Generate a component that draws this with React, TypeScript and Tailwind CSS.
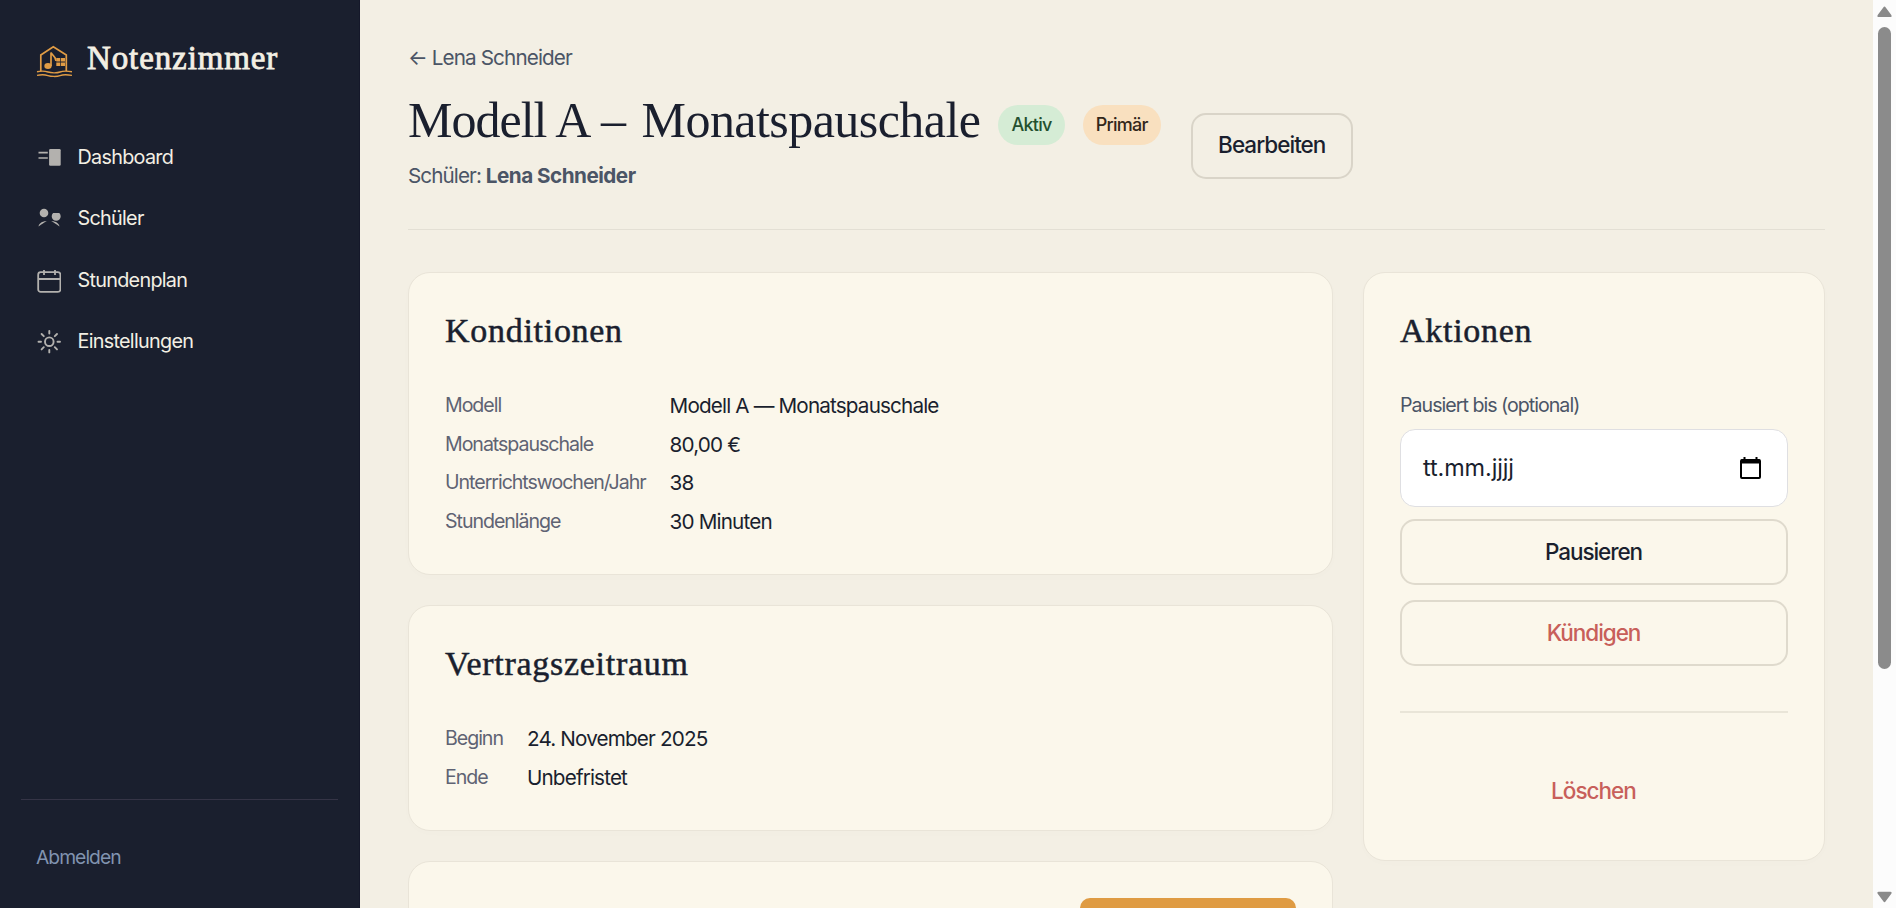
import type { ReactNode } from "react";

const SERIF = "font-['Liberation_Serif',serif]";

interface NavItem {
  label: string;
  icon: ReactNode;
}

const navItems: NavItem[] = [
  {
    label: "Dashboard",
    icon: (
      <>
        <path d="M1.5 6.7h9.3M1.5 12h9.3" stroke="currentColor" strokeWidth="1.7" />
        <rect x="12.1" y="3.1" width="11.6" height="16.7" rx="1.2" fill="currentColor" />
      </>
    ),
  },
  {
    label: "Schüler",
    icon: (
      <>
        <circle cx="7" cy="6" r="4.3" fill="currentColor" />
        <path d="M16.1 6h6.2a4.5 4.5 0 1 1-6.2 0z" fill="currentColor" />
        <path
          d="M1.5 19.4c.8-3.4 4-5.6 8.400-5.200-1.800.5-2.800 1.200-3.600 2-1.600.9-3.200 1.900-4.800 3.200zM22.500 19.400c-.8-3.400-4-5.600-8.400-5.200 1.800.5 2.800 1.200 3.600 2 1.600.9 3.200 1.900 4.800 3.200z"
          fill="currentColor"
        />
      </>
    ),
  },
  {
    label: "Stundenplan",
    icon: (
      <g fill="none" stroke="currentColor" strokeWidth="1.8">
        <rect x="1.2" y="3.2" width="22.2" height="19.7" rx="2.5" />
        <path d="M1.2 10h22.2M7 1v5M18 1v5" />
      </g>
    ),
  },
  {
    label: "Einstellungen",
    icon: (
      <g fill="none" stroke="currentColor" strokeWidth="1.9" strokeLinecap="round">
        <circle cx="12.3" cy="11.700" r="4.3" />
        <path d="M12.3 1v2.500M12.300 19.900v2.500M1.500 11.700H4M20.500 11.700H23M4.600 4l2.200 2.200M17.800 17.200l2.200 2.200M4.600 19.400l2.200-2.200M17.800 6.200L20 4" />
      </g>
    ),
  },
];

function Logo() {
  return (
    <svg width="36" height="36" viewBox="0 0 36 36" fill="none" stroke="currentColor" strokeWidth="1.7">
      <path d="M4.800 28V12L17.300 3.800 30.300 12v16" />
      <path d="M15 23V9.500c1 3 5 3.500 5 8.500" />
      <ellipse cx="12" cy="23" rx="3.700" ry="3" fill="currentColor" stroke="none" />
      <path
        d="M20.300 15h4v3.600h-4zM25 15h4v3.600h-4zM20.300 19.500h4v3.600h-4zM25 19.500h4v3.600h-4z"
        fill="currentColor"
        stroke="none"
      />
      <path d="M1 28.800c5-1.200 8-.8 11 .2s9 1.200 12 0 6-1.400 12-.2" strokeWidth="1.400" />
      <path d="M1 32.400c5-1.200 8-.8 11 .2s9 1.200 12 0 6-1.400 12-.2" strokeWidth="1.400" />
    </svg>
  );
}

function Sidebar() {
  return (
    <aside className="flex h-full w-[360px] shrink-0 flex-col border-r border-[#15182a] bg-[#1a1f2e] text-[#f3efe4]">
      <div className="flex h-[122px] items-center pl-9">
        <span className="text-[#e09c45]">
          <Logo />
        </span>
        <span
          className={`mb-[5px] ml-[15px] text-[33px] leading-none tracking-[0.027em] [-webkit-text-stroke:0.8px_#f3efe4] ${SERIF}`}
        >
          Notenzimmer
        </span>
      </div>
      <nav className="mt-[5px]">
        {navItems.map((item) => (
          <a key={item.label} className="flex h-[61.5px] items-center pl-[37px]">
            <svg width="24" height="24" viewBox="0 0 24 24" className="text-[#b3b1ae]">
              {item.icon}
            </svg>
            <span className="ml-[16.5px] text-[19.8px] tracking-[-0.036em]">{item.label}</span>
          </a>
        ))}
      </nav>
      <div className="mx-[21px] mt-auto flex h-[109px] items-center border-t border-[#353446] pl-[15px] pt-1.5">
        <a className="text-[19.3px] tracking-[-0.05em] text-[#8194b0]">Abmelden</a>
      </div>
    </aside>
  );
}

function Card({ title, children }: { title: string; children: ReactNode }) {
  return (
    <section className="rounded-[22px] border border-[#e9e4d8] bg-[#fbf7eb] px-9 pt-[35px] shadow-[0_2px_12px_rgba(26,31,46,0.01)]">
      <h2
        className={`h-[46px] text-[34px] leading-[46px] tracking-[0.021em] [-webkit-text-stroke:0.5px_#1a1f2e] ${SERIF}`}
      >
        {title}
      </h2>
      {children}
    </section>
  );
}

function Details({ rows }: { rows: [string, string][] }) {
  return (
    <dl className="mt-8 grid grid-cols-[max-content_1fr] gap-x-6">
      {rows.map(([label, value]) => (
        <div key={label} className="contents">
          <dt className="h-[38.6px] text-[19.6px] leading-[38px] tracking-[-0.053em] text-[#5f6373]">{label}</dt>
          <dd className="h-[38.6px] text-[20.7px] leading-[39px] tracking-[-0.041em]">{value}</dd>
        </div>
      ))}
    </dl>
  );
}

function Scrollbar() {
  return (
    <div className="flex h-full w-[23px] shrink-0 flex-col items-center bg-[#fcfcfc]">
      <svg width="23" height="27" viewBox="0 0 23 27" fill="#8a8a8a">
        <path d="M10.300 7.400q1.200-1.800 2.400 0l5.600 7.600q1 2-1 2H5.700q-2 0-1-2z" />
      </svg>
      <div className="h-[642px] w-[13px] rounded-full bg-[#8b8b8b]" />
      <svg width="23" height="27" viewBox="0 0 23 27" fill="#8a8a8a" className="mt-auto">
        <path d="M10.300 20.300q1.200 1.800 2.400 0l5.600-7.600q1-2-1-2H5.700q-2 0-1 2z" />
      </svg>
    </div>
  );
}

export default function App() {
  return (
    <div className="flex h-[908px] w-[1896px] overflow-hidden bg-[#f3efe4] font-['Inter',sans-serif] text-[#1a1f2e]">
      <Sidebar />

      <main className="h-full flex-1 overflow-hidden px-12 pt-11">
        <header className="h-[186px] border-b border-[#e3dfd4]">
          <a className="block h-7 text-[20.7px] leading-7 tracking-[-0.043em] text-[#4b5566]">← Lena Schneider</a>
          <div className="flex">
            <div>
              <div className="mt-[18px] flex h-[69px] items-center">
                <h1 className={`mb-[10px] whitespace-pre text-[50px] leading-[62px] ${SERIF}`}>
                  <span className="tracking-[-0.02em]">Modell A </span>
                  <span className="ml-[2px] mr-[3px]">– </span>
                  <span className="tracking-[-0.011em]">Monatspauschale</span>
                </h1>
                <span className="ml-[18px] h-10 rounded-full bg-[#d5ecd5] px-[13px] text-[18px] font-medium leading-[39px] tracking-[-0.04em] text-[#24502f]">
                  Aktiv
                </span>
                <span className="ml-[18px] h-10 rounded-full bg-[#f9e0bf] px-[13px] text-[18px] font-medium leading-[39px] tracking-[-0.04em] text-[#33261a]">
                  Primär
                </span>
              </div>
              <p className="mt-[2px] text-[20.7px] leading-[30px] tracking-[-0.045em] text-[#4b5566]">
                Schüler: <strong className="font-bold tracking-[-0.025em]">Lena Schneider</strong>
              </p>
            </div>
            <button className="ml-[30px] mt-[41px] h-[66px] w-[162px] rounded-[15px] border-2 border-[#d9d4c8] pb-0.5 text-[22.5px] font-medium tracking-[-0.043em]">
              Bearbeiten
            </button>
          </div>
        </header>

        <div className="mt-[42px] grid grid-cols-[925px_462px] items-start gap-x-[30px]">
          <div className="grid grid-rows-[303px_226px_240px] gap-[30px]">
            <Card title="Konditionen">
              <Details
                rows={[
                  ["Modell", "Modell A — Monatspauschale"],
                  ["Monatspauschale", "80,00 €"],
                  ["Unterrichtswochen/Jahr", "38"],
                  ["Stundenlänge", "30 Minuten"],
                ]}
              />
            </Card>
            <Card title="Vertragszeitraum">
              <Details
                rows={[
                  ["Beginn", "24. November 2025"],
                  ["Ende", "Unbefristet"],
                ]}
              />
            </Card>
            <section className="flex justify-end rounded-[22px] border border-[#e9e4d8] bg-[#fbf7eb] px-9 pt-9">
              <button className="h-16 w-[216px] rounded-[10px] bg-[#df9b43]" />
            </section>
          </div>

          <div className="grid grid-rows-[589px]">
            <Card title="Aktionen">
              <label className="mt-8 block text-[19.6px] leading-[38px] tracking-[-0.05em] text-[#4b5566]">
                Pausiert bis (optional)
              </label>
              <div className="mt-[5px] flex h-[78px] items-center justify-between rounded-[15px] border border-[#dfdfe2] bg-white pl-[22px] pr-[26px] text-[23.4px] tracking-[-0.004em]">
                <span>tt.mm.jjjj</span>
                <svg width="21" height="22" viewBox="0 0 21 22">
                  <path d="M4.500 0v3M16.500 0v3" stroke="#000" strokeWidth="2" />
                  <rect x="1" y="3" width="19" height="18" rx="1" fill="none" stroke="#000" strokeWidth="2" />
                  <path d="M1 2.500h19v4H1z" fill="#000" />
                </svg>
              </div>
              <button className="mt-3 h-[66px] w-full rounded-[15px] border-2 border-[#dfdacd] pr-px text-[22.5px] font-medium tracking-[-0.047em]">
                Pausieren
              </button>
              <button className="mt-[15px] h-[66px] w-full rounded-[15px] border-2 border-[#dfdacd] pr-px text-[22.5px] font-medium tracking-[-0.047em] text-[#c85f5a]">
                Kündigen
              </button>
              <div className="mt-[45px] border-t-2 border-[#e9e5d8]" />
              <button className="mt-[45px] h-[66px] w-full pr-px text-[22.5px] font-medium tracking-[-0.044em] text-[#c85f5a]">
                Löschen
              </button>
            </Card>
          </div>
        </div>
      </main>

      <Scrollbar />
    </div>
  );
}
